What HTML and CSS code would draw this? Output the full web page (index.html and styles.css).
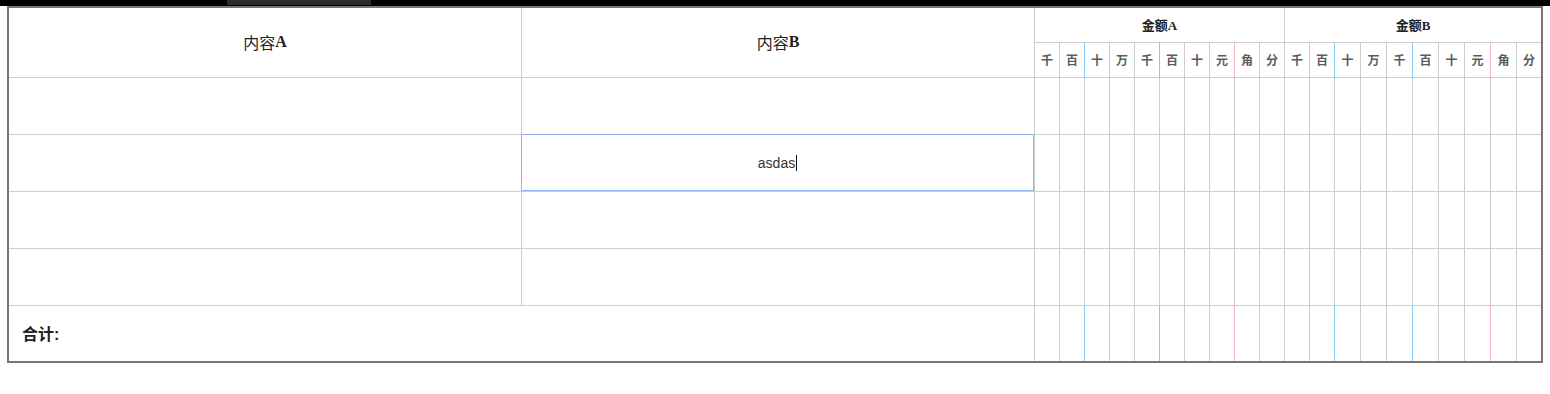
FILE: index.html
```html
<!DOCTYPE html>
<html lang="zh-CN">
<head>
<meta charset="utf-8">
<title>表格</title>
<link rel="stylesheet" href="styles.css">
</head>
<body>
<div class="topbar"><div class="topbar-thumb"></div></div>
<div class="sheet">
  <div class="cell head-main">内容<b class="latin">A</b></div>
  <div class="cell head-main">内容<b class="latin">B</b></div>
  <div class="cell group">金额A</div>
  <div class="cell group end">金额B</div>

  <div class="cell dg">千</div><div class="cell dg b">百</div><div class="cell dg">十</div><div class="cell dg">万</div><div class="cell dg b">千</div><div class="cell dg">百</div><div class="cell dg">十</div><div class="cell dg p">元</div><div class="cell dg">角</div><div class="cell dg">分</div>
  <div class="cell dg">千</div><div class="cell dg b">百</div><div class="cell dg">十</div><div class="cell dg">万</div><div class="cell dg b">千</div><div class="cell dg">百</div><div class="cell dg">十</div><div class="cell dg p">元</div><div class="cell dg">角</div><div class="cell dg end">分</div>

  <div class="cell"></div><div class="cell"></div>
  <div class="cell"></div><div class="cell"></div><div class="cell"></div><div class="cell"></div><div class="cell"></div><div class="cell"></div><div class="cell"></div><div class="cell"></div><div class="cell"></div><div class="cell"></div>
  <div class="cell"></div><div class="cell"></div><div class="cell"></div><div class="cell"></div><div class="cell"></div><div class="cell"></div><div class="cell"></div><div class="cell"></div><div class="cell"></div><div class="cell end"></div>

  <div class="cell"></div><div class="cell editing"><div class="editor"><span class="editor-text">asdas</span><span class="caret"></span></div></div>
  <div class="cell"></div><div class="cell"></div><div class="cell"></div><div class="cell"></div><div class="cell"></div><div class="cell"></div><div class="cell"></div><div class="cell"></div><div class="cell"></div><div class="cell"></div>
  <div class="cell"></div><div class="cell"></div><div class="cell"></div><div class="cell"></div><div class="cell"></div><div class="cell"></div><div class="cell"></div><div class="cell"></div><div class="cell"></div><div class="cell end"></div>

  <div class="cell"></div><div class="cell"></div>
  <div class="cell"></div><div class="cell"></div><div class="cell"></div><div class="cell"></div><div class="cell"></div><div class="cell"></div><div class="cell"></div><div class="cell"></div><div class="cell"></div><div class="cell"></div>
  <div class="cell"></div><div class="cell"></div><div class="cell"></div><div class="cell"></div><div class="cell"></div><div class="cell"></div><div class="cell"></div><div class="cell"></div><div class="cell"></div><div class="cell end"></div>

  <div class="cell"></div><div class="cell"></div>
  <div class="cell"></div><div class="cell"></div><div class="cell"></div><div class="cell"></div><div class="cell"></div><div class="cell"></div><div class="cell"></div><div class="cell"></div><div class="cell"></div><div class="cell"></div>
  <div class="cell"></div><div class="cell"></div><div class="cell"></div><div class="cell"></div><div class="cell"></div><div class="cell"></div><div class="cell"></div><div class="cell"></div><div class="cell"></div><div class="cell end"></div>

  <div class="cell total-label foot">合计:</div>
  <div class="cell foot"></div><div class="cell foot b"></div><div class="cell foot"></div><div class="cell foot"></div><div class="cell foot b"></div><div class="cell foot"></div><div class="cell foot"></div><div class="cell foot p"></div><div class="cell foot"></div><div class="cell foot"></div>
  <div class="cell foot"></div><div class="cell foot b"></div><div class="cell foot"></div><div class="cell foot"></div><div class="cell foot b"></div><div class="cell foot"></div><div class="cell foot"></div><div class="cell foot p"></div><div class="cell foot"></div><div class="cell foot end"></div>
</div>
</body>
</html>
```
FILE: styles.css
```css
html, body {
  margin: 0;
  padding: 0;
  background: #fff;
}

body {
  font-family: "Liberation Sans", "Noto Sans CJK SC", sans-serif;
  color: #222;
}

.topbar {
  height: 6px;
  background: #000;
  padding-left: 227px;
}

.topbar-thumb {
  width: 144px;
  height: 5px;
  background: #2b2b2b;
}

.sheet {
  margin-left: 7px;
  width: 1536px;
  box-sizing: border-box;
  border: 2px solid #767676;
  display: grid;
  grid-template-columns: 513px 513px repeat(10, 25px) 25px 25px repeat(7, 26px) 24px;
  grid-template-rows: 35px 35px 57px 57px 57px 57px 55px;
}

.cell {
  box-sizing: border-box;
  border-right: 1px solid #cdcdcd;
  border-bottom: 1px solid #cdcdcd;
  display: flex;
  align-items: center;
  justify-content: center;
  min-width: 0;
}

.cell.end {
  border-right: none;
}

.head-main {
  grid-row: span 2;
  font-family: "Liberation Serif", "Noto Sans CJK SC", serif;
  font-size: 16px;
  color: #222;
  padding-bottom: 2px;
}

.latin {
  font-weight: bold;
}

.group {
  grid-column: span 10;
  font-family: "Liberation Serif", "Noto Sans CJK SC", serif;
  font-size: 13px;
  font-weight: bold;
  color: #222;
  padding-bottom: 2px;
}

.dg {
  font-family: "Liberation Serif", "Noto Sans CJK SC", serif;
  font-size: 12px;
  font-weight: bold;
  color: #5c5c5c;
}

.dg.b, .foot.b {
  border-right-color: #84c8f6;
}

.dg.p, .foot.p {
  border-right-color: #f7b3c4;
}

.foot {
  border-bottom: none;
}

.total-label {
  grid-column: span 2;
  justify-content: flex-start;
  padding-left: 13px;
  padding-bottom: 2px;
  font-size: 16px;
  font-weight: bold;
  color: #222;
}

.editing {
  position: relative;
}

.editor {
  position: absolute;
  top: -1px;
  left: -1px;
  right: 0;
  bottom: 0;
  box-sizing: border-box;
  border: 1px solid #8fb3ee;
  display: flex;
  align-items: center;
  justify-content: center;
  font-family: "Liberation Sans", sans-serif;
  font-size: 14px;
  color: #333;
}

.caret {
  display: inline-block;
  width: 1px;
  height: 16px;
  background: #111;
  margin-left: 1px;
}
```
